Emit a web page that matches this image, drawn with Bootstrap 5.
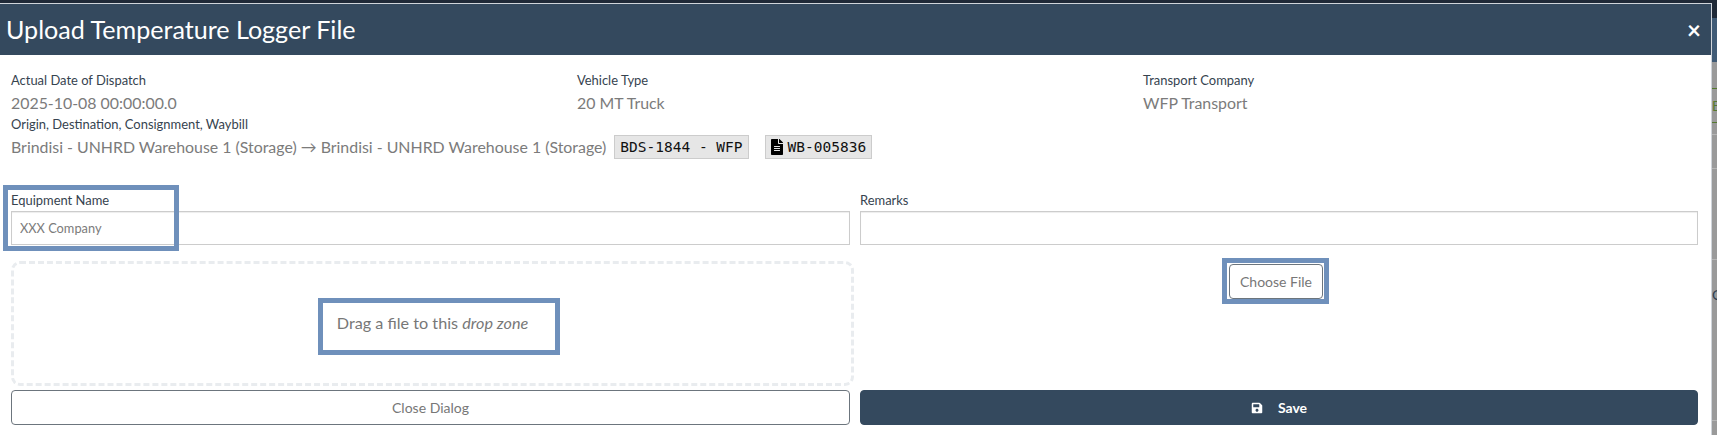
<!DOCTYPE html>
<html lang="en">
<head>
<meta charset="utf-8">
<title>Upload Temperature Logger File</title>
<link href="https://cdn.jsdelivr.net/npm/bootstrap@5.3.0/dist/css/bootstrap.min.css" rel="stylesheet">
<script src="https://cdn.jsdelivr.net/npm/bootstrap@5.3.0/dist/js/bootstrap.bundle.min.js"></script>
<style>
html,body{height:100%;}
body{font-family:"Lato","Liberation Sans",sans-serif;background:#9a9a9a;overflow:hidden;color:#777;}
.topband{height:3px;background:#1f2937;}
.stage{position:relative;height:432px;}
.sheet{width:1712px;height:432px;background:#fff;border-top:1px solid #cfd4da;border-right:1px solid #cfd4da;}
.sheet-head{height:51px;background:#34495e;color:#fff;padding:0 6px;flex:none;}
.sheet-head h1{font-size:25.1px;font-weight:400;margin:0;line-height:1;}
.x-btn{background:none;border:0;color:#fff;font-size:24px;font-weight:700;line-height:1;padding:0;margin-right:4px;}
.sheet-body{padding:16px 14px 0 11px;}
.cap{font-size:12.95px;line-height:18px;color:#36434f;display:block;margin-bottom:2px;}
.val{font-size:15.9px;line-height:24px;color:#7b7b7b;}
.info-col{flex:none;width:566px;}
.info-col .val{display:block;}
.origin-row{height:24px;margin-bottom:32px;}
.tag{font-family:"DejaVu Sans Mono",monospace;font-size:14.5px;line-height:22px;height:24px;background:#e6e6e6;border:1px solid #ccc;color:#111;padding:0 5px;display:inline-flex;align-items:center;}
.tag svg{margin-right:5px;}
.form-layout{display:grid;grid-template-columns:839px 838px;column-gap:10px;}
.field{height:34px;border:1px solid #ccc;border-radius:0;font-size:12.8px;padding:0 8px;box-shadow:inset 0 1px 1px rgba(0,0,0,.075);}
.field::placeholder{color:#7b7b7b;opacity:1;}
.drop{height:125px;margin-top:16px;margin-right:-4px;border:3px dashed #e9ecef;border-radius:9px;font-size:16.2px;color:#777;}
.pick-cell{margin-top:19px;padding-right:6px;}
.btn-line{height:35px;border:1px solid #6c757d;border-radius:4px;background:#fff;color:#777;font-size:14px;padding:0;}
.btn-line:hover{background:#fff;color:#777;border-color:#6c757d;}
.btn-fill{height:35px;background:#34495e;border:1px solid #34495e;border-radius:4px;color:#fff;font-size:14px;padding:0;font-weight:700;gap:15px;}
.btn-fill:hover{background:#34495e;color:#fff;border-color:#34495e;}
.pick{width:94px;}
.act-row{margin-top:4px;}
.mark-box{position:absolute;border:5px solid #6f90bb;pointer-events:none;}
.m1{left:3px;top:182px;width:176px;height:66px;}
.m2{left:318px;top:295px;width:242px;height:57px;}
.m3{left:1222px;top:255px;width:107px;height:46px;}
.bleed{position:absolute;top:0;left:1712px;width:5px;height:435px;overflow:hidden;background:
  linear-gradient(#1f2937,#1f2937) 0 0/100% 18px no-repeat,
  linear-gradient(#3f5a75,#3f5a75) 0 18px/100% 44px no-repeat,
  linear-gradient(#55792f,#55792f) 0 88px/100% 1px no-repeat,
  linear-gradient(#55792f,#55792f) 0 122px/100% 1px no-repeat,
  linear-gradient(#b5b5b5,#b5b5b5) 0 134px/100% 1px no-repeat,
  linear-gradient(#b5b5b5,#b5b5b5) 0 168px/100% 1px no-repeat,
  linear-gradient(#b5b5b5,#b5b5b5) 0 259px/100% 1px no-repeat,
  linear-gradient(#b5b5b5,#b5b5b5) 0 420px/100% 1px no-repeat,
  #9a9a9a;}
.bleed-e,.bleed-c{position:absolute;left:0;font-size:14px;line-height:1;}
.bleed-e{top:99px;color:#55792f;}
.bleed-c{top:288px;color:#2f3e50;}
</style>
</head>
<body>
<div class="topband"></div>
<div class="stage">
  <div class="sheet d-flex flex-column">
    <div class="sheet-head d-flex align-items-center justify-content-between">
      <h1>Upload Temperature Logger File</h1>
      <button class="x-btn" type="button" aria-label="Close">×</button>
    </div>
    <div class="sheet-body flex-grow-1">
      <div class="d-flex">
        <div class="info-col"><span class="cap">Actual Date of Dispatch</span><span class="val">2025-10-08 00:00:00.0</span></div>
        <div class="info-col"><span class="cap">Vehicle Type</span><span class="val">20 MT Truck</span></div>
        <div class="info-col"><span class="cap">Transport Company</span><span class="val">WFP Transport</span></div>
      </div>
      <span class="cap">Origin, Destination, Consignment, Waybill</span>
      <div class="d-flex align-items-center val origin-row">
        <span>Brindisi - UNHRD Warehouse 1 (Storage) → Brindisi - UNHRD Warehouse 1 (Storage)</span>
        <span class="tag ms-2">BDS-1844 - WFP</span>
        <span class="tag ms-3"><svg width="12" height="16" viewBox="0 0 384 512"><path fill="#000" d="M224 136V0H24C10.700 0 0 10.700 0 24v464c0 13.300 10.700 24 24 24h336c13.300 0 24-10.700 24-24V160H248c-13.200 0-24-10.800-24-24zm64 236c0 6.600-5.400 12-12 12H108c-6.600 0-12-5.400-12-12v-8c0-6.600 5.400-12 12-12h168c6.600 0 12 5.400 12 12v8zm0-64c0 6.600-5.400 12-12 12H108c-6.600 0-12-5.400-12-12v-8c0-6.600 5.400-12 12-12h168c6.600 0 12 5.400 12 12v8zm0-72v8c0 6.600-5.400 12-12 12H108c-6.600 0-12-5.400-12-12v-8c0-6.600 5.400-12 12-12h168c6.600 0 12 5.400 12 12zm96-114.100v6.100H256V0h6.100c6.400 0 12.500 2.500 17 7l97.900 98c4.500 4.500 7 10.600 7 16.900z"/></svg>WB-005836</span>
      </div>
      <div class="form-layout">
        <div><label class="cap">Equipment Name</label><input class="form-control field" placeholder="XXX Company"></div>
        <div><label class="cap">Remarks</label><input class="form-control field"></div>
        <div class="drop d-flex align-items-center justify-content-center"><span>Drag a file to this <em>drop zone</em></span></div>
        <div class="pick-cell d-flex justify-content-center align-items-start"><button class="btn btn-line pick" type="button">Choose File</button></div>
        <button class="btn btn-line act-row w-100" type="button">Close Dialog</button>
        <button class="btn btn-fill act-row w-100 d-flex align-items-center justify-content-center" type="button"><svg width="12" height="12" viewBox="0 0 448 512"><path fill="#fff" d="M433.941 129.941l-83.882-83.882A48 48 0 0 0 316.118 32H48C21.490 32 0 53.490 0 80v352c0 26.510 21.490 48 48 48h352c26.510 0 48-21.490 48-48V163.882a48 48 0 0 0-14.059-33.941zM224 416c-35.346 0-64-28.654-64-64 0-35.346 28.654-64 64-64s64 28.654 64 64c0 35.346-28.654 64-64 64zm96-304.520V212c0 6.627-5.373 12-12 12H76c-6.627 0-12-5.373-12-12V108c0-6.627 5.373-12 12-12h228.520c3.183 0 6.235 1.264 8.485 3.515l3.480 3.480A11.996 11.996 0 0 1 320 111.480z"/></svg><span>Save</span></button>
      </div>
    </div>
  </div>
  <div class="mark-box m1"></div>
  <div class="mark-box m2"></div>
  <div class="mark-box m3"></div>
</div>
<div class="bleed"><span class="bleed-e">E</span><span class="bleed-c">C</span></div>
</body>
</html>
